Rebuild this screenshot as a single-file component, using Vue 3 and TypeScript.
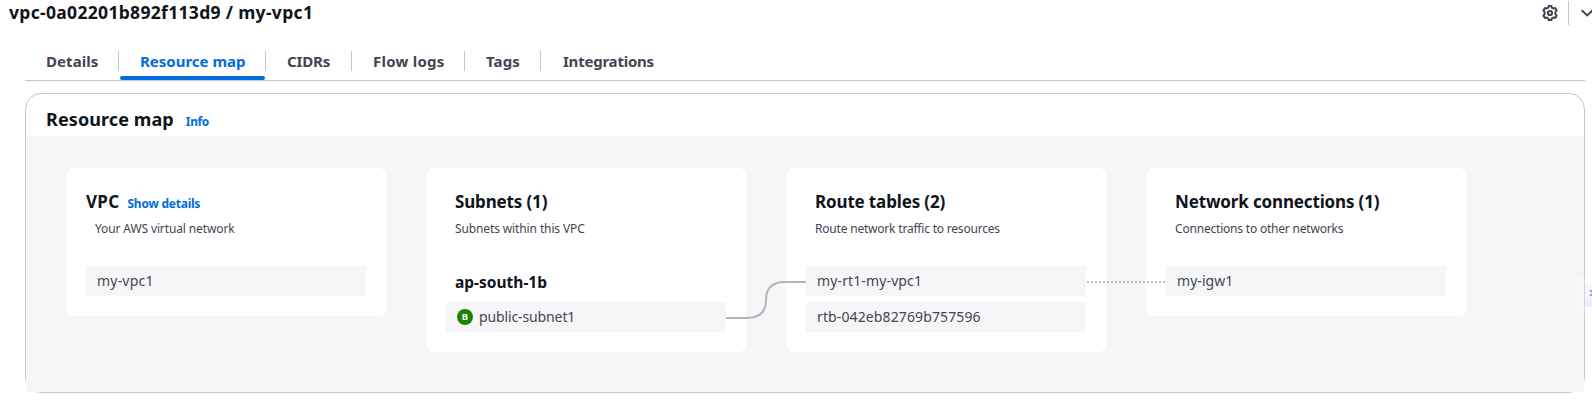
<script setup lang="ts">
interface Tab { id: string; label: string }
interface Resource { id: string; name: string; zone?: string; badge?: string }
interface Column { id: string; title: string; action?: string; description: string; resources: Resource[] }

const tabs: Tab[] = [
  { id: 'details', label: 'Details' },
  { id: 'map', label: 'Resource map' },
  { id: 'cidrs', label: 'CIDRs' },
  { id: 'flow', label: 'Flow logs' },
  { id: 'tags', label: 'Tags' },
  { id: 'integrations', label: 'Integrations' },
]
const activeTab = 'map'

const columns: Column[] = [
  { id: 'vpc', title: 'VPC', action: 'Show details', description: 'Your AWS virtual network', resources: [{ id: 'vpc1', name: 'my-vpc1' }] },
  { id: 'subnets', title: 'Subnets (1)', description: 'Subnets within this VPC', resources: [{ id: 'subnet1', name: 'public-subnet1', zone: 'ap-south-1b', badge: 'B' }] },
  { id: 'routes', title: 'Route tables (2)', description: 'Route network traffic to resources', resources: [{ id: 'rt1', name: 'my-rt1-my-vpc1' }, { id: 'rtb', name: 'rtb-042eb82769b757596' }] },
  { id: 'network', title: 'Network connections (1)', description: 'Connections to other networks', resources: [{ id: 'igw1', name: 'my-igw1' }] },
]
</script>

<template>
  <div class="page">
    <header class="top">
      <h1>vpc-0a02201b892f113d9 / my-vpc1</h1>
      <div class="tools">
        <svg class="gear" viewBox="0 0 16 16" width="16" height="16">
          <path d="M6.2 2.6 6.7.9h2.6l.5 1.7 1.5.9 1.8-.5 1.5 2.4-1.2 1.5v2.2l1.2 1.5-1.5 2.4-1.8-.5-1.5.9-.5 1.7H6.7l-.5-1.7-1.5-.9-1.8.5-1.5-2.4 1.2-1.5V6.9L1.4 5.4 2.9 3l1.8.5z" />
          <circle cx="8" cy="8" r="2.1" />
        </svg>
        <span class="tool-divider"></span>
        <svg class="chevron" viewBox="0 0 12 8" width="12" height="8"><path d="M.7 1.2 6.2 6.4 11.7 1.2" /></svg>
      </div>
    </header>

    <nav class="tabs">
      <button v-for="t in tabs" :key="t.id" type="button" class="tab" :class="['tab-' + t.id, { active: t.id === activeTab }]">
        <span>{{ t.label }}</span>
      </button>
    </nav>

    <section class="panel">
      <div class="panel-head">
        <h2>Resource map</h2>
        <a class="link info">Info</a>
      </div>
      <div class="canvas">
        <article v-for="c in columns" :key="c.id" class="card" :class="'card-' + c.id">
          <div class="card-title">
            <h3>{{ c.title }}</h3>
            <a v-if="c.action" class="link details">{{ c.action }}</a>
          </div>
          <p class="description">{{ c.description }}</p>
          <div class="resources">
            <template v-for="r in c.resources" :key="r.id">
              <h4 v-if="r.zone">{{ r.zone }}</h4>
              <div class="resource">
                <span v-if="r.badge" class="badge">{{ r.badge }}</span>
                <span :class="'name-' + r.id">{{ r.name }}</span>
              </div>
            </template>
          </div>
        </article>
        <svg class="links" width="1558" height="256" viewBox="0 0 1558 256">
          <path class="solid" d="M700 182H721C734 182 740 175 740 164C740 153 746 146 759 146H780" />
          <path class="dotted" d="M1061 146H1140" />
        </svg>
      </div>
    </section>

    <aside class="drawer">
      <div class="drawer-button">
        <svg width="8" height="10" viewBox="0 0 8 10"><path d="M1 1 4.5 4 1 7M4 1 7.5 4 4 7" /></svg>
      </div>
    </aside>
  </div>
</template>

<style>
body { margin: 0; background: #fff; overflow: hidden; }
</style>

<style scoped>
.page { position: relative; width: 1592px; height: 405px; overflow: hidden; background: #fff; color: #0f141a; font-family: "Noto Sans", "Open Sans", sans-serif; }
h1, h2, h3, h4, p { margin: 0; font-weight: 700; white-space: nowrap; }
.top { display: flex; justify-content: space-between; height: 47px; padding-left: 9px; }
h1 { font-size: 17.5px; line-height: 24px; letter-spacing: .32px; }
.tools { display: flex; width: 50px; flex: none; }
.gear { margin-top: 5px; flex: none; }
.gear path, .gear circle { fill: none; stroke: #424650; stroke-width: 2; stroke-linejoin: round; }
.tool-divider { width: 1px; height: 24px; margin: 1px 12px 0 10px; background: #c6c6cd; flex: none; }
.chevron { margin-top: 9px; flex: none; }
.chevron path { fill: none; stroke: #424650; stroke-width: 2; }

.tabs { display: flex; box-sizing: border-box; width: 1560px; height: 34px; margin-left: 25px; border-bottom: 1px solid #c6c6cd; }
.tab { position: relative; display: flex; align-items: flex-start; box-sizing: border-box; height: 33px; padding: 4px 0 0 21px; border: 0; background: none; text-align: left; font: 700 15px/20px "Noto Sans", "Open Sans", sans-serif; color: #424650; white-space: nowrap; }
.tab:not(:last-child)::after { content: ""; position: absolute; right: 0; top: 4px; width: 1px; height: 20px; background: #c6c6cd; }
.tab.active { color: #006ce0; }
.tab.active::before { content: ""; position: absolute; left: 1px; right: 1px; bottom: 0; height: 4px; border-radius: 2px; background: #006ce0; }
.tab-details { width: 94px; letter-spacing: .08px; }
.tab-map { width: 147px; }
.tab-cidrs { width: 86px; letter-spacing: -.15px; }
.tab-flow { width: 113px; letter-spacing: .24px; }
.tab-tags { width: 76px; letter-spacing: .1px; }
.tab-integrations { width: 120px; padding-left: 22px; letter-spacing: -.22px; }

.panel { box-sizing: border-box; width: 1560px; height: 300px; margin: 12px 0 0 25px; border: 1px solid #c6c6cd; border-radius: 16px; }
.panel-head { display: flex; align-items: baseline; box-sizing: border-box; height: 42px; padding: 13px 0 0 20px; }
h2 { font-size: 18px; line-height: 24px; letter-spacing: .1px; }
.link { color: #006ce0; font-size: 12px; font-weight: 700; line-height: 16px; white-space: nowrap; }
.info { margin-left: 12px; letter-spacing: -.4px; }
.details { margin-left: 8px; letter-spacing: -.22px; }
.canvas { position: relative; display: flex; align-items: flex-start; gap: 40px; box-sizing: border-box; height: 256px; padding: 32px 40px; background: #f6f6f9; }
.card { box-sizing: border-box; width: 320px; padding: 23px 20px 20px; border-radius: 8px; background: #fff; flex: none; }
.card-title { display: flex; align-items: baseline; height: 22px; padding-left: 9px; }
.card-vpc .card-title { padding-left: 0; }
h3 { font-size: 17px; line-height: 22px; letter-spacing: -.15px; }
.card-vpc h3 { letter-spacing: .3px; }
.description { margin-top: 8px; padding-left: 9px; color: #424650; font-size: 12px; font-weight: 400; line-height: 16px; letter-spacing: -.2px; }
.card-vpc .description, .card-subnets .description { letter-spacing: -.12px; }
.resources { display: flex; flex-direction: column; gap: 6px; margin-top: 29px; }
h4 { padding: 6px 0 4px 9px; font-size: 15.5px; line-height: 20px; }
.resource { display: flex; align-items: center; box-sizing: border-box; height: 30px; padding-left: 11px; border-radius: 2px; background: #f6f6f9; color: #424650; font-size: 14px; line-height: 30px; white-space: nowrap; }
.badge { width: 16px; height: 16px; margin-right: 6px; border-radius: 50%; background: #1d8102; color: #fff; font-size: 9.5px; font-weight: 700; line-height: 16px; text-align: center; }
.name-vpc1 { letter-spacing: .2px; }
.name-subnet1 { letter-spacing: -.12px; }
.name-rt1 { letter-spacing: .13px; }
.name-rtb { letter-spacing: .12px; }
.name-igw1 { letter-spacing: .05px; }
.links { position: absolute; left: 0; top: 0; pointer-events: none; }
.links path { fill: none; stroke: #b4b4bb; stroke-width: 2; }
.links .dotted { stroke: #bcbcc2; stroke-dasharray: 2 2; }

.drawer { position: absolute; left: 1576px; top: 275px; box-sizing: border-box; width: 30px; height: 40px; padding: 8px 0 0 9px; border-radius: 4px; background: rgba(255, 255, 255, .22); box-shadow: 0 0 2px rgba(0, 0, 0, .07); }
.drawer-button { width: 24px; height: 24px; border-radius: 4px 0 0 4px; background: linear-gradient(#f3f7fb 45%, #efe6fb); }
.drawer svg { display: block; padding: 6px 0 0 4px; overflow: visible; }
.drawer path { fill: none; stroke: #8c8c94; stroke-width: 1.5; }
</style>
